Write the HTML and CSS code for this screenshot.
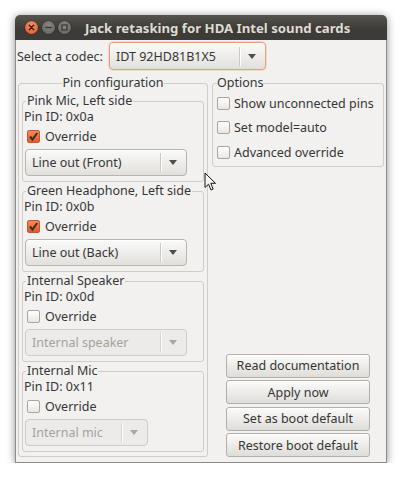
FILE: index.html
```html
<!DOCTYPE html>
<html>
<head>
<meta charset="utf-8">
<link rel="stylesheet" href="styles.css">
</head>
<body>
<div class="window">
  <div class="titlebar">
    <div class="wbtns">
      <span class="wbtn close"><svg width="13" height="13" viewBox="0 0 13 13"><path d="M4.3 4.3 L8.7 8.7 M8.7 4.3 L4.3 8.7" stroke="#3a1d10" stroke-width="1.4" stroke-linecap="round"/></svg></span>
      <span class="wbtn"><svg width="13" height="13" viewBox="0 0 13 13"><path d="M3.8 6.5 H9.2" stroke="#3b3a36" stroke-width="1.6" stroke-linecap="round"/></svg></span>
      <span class="wbtn"><svg width="13" height="13" viewBox="0 0 13 13"><rect x="4" y="4" width="5" height="5" fill="none" stroke="#3b3a36" stroke-width="1.3"/></svg></span>
    </div>
    <div class="title">Jack retasking for HDA Intel sound cards</div>
  </div>
  <div class="content">
    <div class="codec-row">
      <span class="codec-label">Select a codec:</span>
      <div class="combo focus codec"><span class="combo-text">IDT 92HD81B1X5</span><span class="combo-sep"></span><span class="combo-arrow"></span></div>
    </div>
    <div class="panes">
      <fieldset class="frame pinconf">
        <legend class="centered">Pin configuration</legend>
        <fieldset class="frame pin">
          <legend>Pink Mic, Left side</legend>
          <div class="pinid">Pin ID: 0x0a</div>
          <div class="check"><span class="box checked"><svg width="13" height="13" viewBox="0 0 13 13"><path d="M3 6.5 L5.5 9.5 L10.2 3" fill="none" stroke="#3f2a20" stroke-width="2"/></svg></span>Override</div>
          <div class="combo wide"><span class="combo-text">Line out (Front)</span><span class="combo-sep"></span><span class="combo-arrow"></span></div>
        </fieldset>
        <fieldset class="frame pin">
          <legend>Green Headphone, Left side</legend>
          <div class="pinid">Pin ID: 0x0b</div>
          <div class="check"><span class="box checked"><svg width="13" height="13" viewBox="0 0 13 13"><path d="M3 6.5 L5.5 9.5 L10.2 3" fill="none" stroke="#3f2a20" stroke-width="2"/></svg></span>Override</div>
          <div class="combo wide"><span class="combo-text">Line out (Back)</span><span class="combo-sep"></span><span class="combo-arrow"></span></div>
        </fieldset>
        <fieldset class="frame pin">
          <legend>Internal Speaker</legend>
          <div class="pinid">Pin ID: 0x0d</div>
          <div class="check"><span class="box"></span>Override</div>
          <div class="combo wide disabled"><span class="combo-text">Internal speaker</span><span class="combo-sep"></span><span class="combo-arrow"></span></div>
        </fieldset>
        <fieldset class="frame pin">
          <legend>Internal Mic</legend>
          <div class="pinid">Pin ID: 0x11</div>
          <div class="check"><span class="box"></span>Override</div>
          <div class="combo narrow disabled"><span class="combo-text">Internal mic</span><span class="combo-sep"></span><span class="combo-arrow"></span></div>
        </fieldset>
      </fieldset>
      <div class="rightcol">
        <fieldset class="frame options">
          <legend>Options</legend>
          <div class="opt"><span class="box"></span>Show unconnected pins</div>
          <div class="opt"><span class="box"></span>Set model=auto</div>
          <div class="opt"><span class="box"></span>Advanced override</div>
        </fieldset>
        <div class="buttons">
          <div class="btn">Read documentation</div>
          <div class="btn">Apply now</div>
          <div class="btn">Set as boot default</div>
          <div class="btn">Restore boot default</div>
        </div>
      </div>
    </div>
  </div>
</div>
<svg class="cursor" width="14" height="20" viewBox="0 0 14 20"><path d="M1 1 L1 15.5 L4.5 12.2 L7 18 L9.2 17 L6.8 11.3 L11.5 11.3 Z" fill="#f4f4f4" stroke="#111" stroke-width="1" stroke-linejoin="round"/></svg>
</body>
</html>
```

FILE: styles.css
```css
body {
  margin: 0;
  background: #ffffff;
  font-family: "Noto Sans", "DejaVu Sans", sans-serif;
  font-size: 12.5px;
  color: #363636;
}

.window {
  margin: 15px 0 0 15px;
  width: 372px;
  height: 448px;
  display: flex;
  flex-direction: column;
  border-radius: 5px 5px 0 0;
  box-shadow: 0 1px 9px rgba(0, 0, 0, 0.45);
}

.titlebar {
  flex: none;
  height: 25px;
  background: linear-gradient(#55544d, #3c3b37 55%);
  border-radius: 5px 5px 0 0;
  display: flex;
  align-items: center;
  padding-left: 10px;
}

.wbtns {
  display: flex;
  gap: 3.5px;
}

.wbtn {
  width: 13px;
  height: 13px;
  border-radius: 50%;
  background: radial-gradient(circle at 50% 35%, #8a8882, #5f5e58);
  box-shadow: 0 0 0 0.5px #2e2d2a;
  display: flex;
}

.wbtn.close {
  background: radial-gradient(circle at 50% 35%, #f79067, #e4541f);
}

.title {
  margin-left: 14px;
  color: #dfdbd2;
  font-weight: bold;
  font-size: 13.2px;
  white-space: nowrap;
}

.content {
  flex: 1;
  background: #f2f1f0;
  border: 1px solid #8e8b85;
  border-top: none;
  padding: 2px 2px 5px 1px;
  display: flex;
  flex-direction: column;
}

.codec-row {
  display: flex;
  align-items: center;
  height: 28px;
}

.codec-label {
  flex: 0 0 92px;
}

.combo {
  box-sizing: border-box;
  display: flex;
  align-items: center;
  border: 1px solid #b9b5ae;
  border-radius: 4px;
  background: linear-gradient(#fafaf9, #e2e0dc);
  box-shadow: inset 0 1px 0 #ffffff;
}

.combo.codec {
  width: 157px;
  height: 28px;
}

.combo.focus {
  border-color: #e59c7f;
  box-shadow: 0 0 0 1px rgba(240, 119, 70, 0.18), inset 0 1px 0 #ffffff;
}

.combo-text {
  flex: 1;
  padding-left: 6px;
  white-space: nowrap;
}

.combo-sep {
  width: 1px;
  height: 19px;
  background: #cdc9c2;
  box-shadow: 1px 0 0 #ffffff;
}

.combo-arrow {
  width: 0;
  height: 0;
  margin: 0 9px 0 8px;
  border-left: 4.5px solid transparent;
  border-right: 4.5px solid transparent;
  border-top: 5px solid #4e4d4a;
}

.combo.disabled {
  background: #ecebe9;
  border-color: #cfcbc5;
  color: #a5a29c;
  box-shadow: none;
}

.combo.disabled .combo-arrow {
  border-top-color: #aaa7a1;
}

.combo.disabled .combo-sep {
  background: #d6d3cd;
}

.panes {
  flex: 1;
  display: flex;
  gap: 4px;
  margin-top: 6px;
  margin-left: 1px;
}

.frame {
  margin: 0;
  min-width: 0;
  border: 1px solid #d0ccc6;
  border-radius: 3px;
}

.frame legend {
  padding: 0 1px;
  line-height: 14px;
}

.frame legend.centered {
  margin: 0 auto;
}

.pinconf {
  box-sizing: border-box;
  width: 190px;
  flex: none;
  padding: 4px 3px 3px 3px;
}

.pin {
  padding: 1px 0 5px 1px;
  margin-top: 2px;
}

.pin:first-of-type {
  margin-top: 0;
}

.pin legend {
  margin-left: 2px;
}

.pinid {
  height: 16px;
  line-height: 16px;
}

.check {
  display: flex;
  align-items: center;
  gap: 5px;
  height: 18px;
  margin: 2px 0 0 3px;
}

.box {
  box-sizing: border-box;
  width: 13px;
  height: 13px;
  flex: none;
  border: 1px solid #aaa59d;
  border-radius: 2px;
  background: linear-gradient(#ffffff, #e9e7e3);
  display: flex;
}

.box.checked {
  border-color: #c4582d;
  background: linear-gradient(#f6895c, #e35a2b);
}

.box svg {
  margin: -1px;
}

.combo.wide {
  width: 162px;
  height: 27px;
  margin: 4px 0 0 1px;
}

.combo.narrow {
  width: 123px;
  height: 27px;
  margin: 4px 0 0 1px;
}

.rightcol {
  flex: 1;
  display: flex;
  flex-direction: column;
}

.options {
  padding: 1px 4px 1px 4px;
}

.options legend {
  padding: 0;
}

.opt {
  display: flex;
  align-items: center;
  gap: 4px;
  height: 24.5px;
}

.buttons {
  margin-top: auto;
  align-self: center;
  display: flex;
  flex-direction: column;
  gap: 2.5px;
}

.btn {
  box-sizing: border-box;
  width: 144px;
  height: 24px;
  border: 1px solid #b3afa8;
  border-radius: 3px;
  background: linear-gradient(#fbfbfa, #dfddd9);
  box-shadow: inset 0 1px 0 #ffffff;
  display: flex;
  align-items: center;
  justify-content: center;
  white-space: nowrap;
}

.cursor {
  position: absolute;
  left: 204px;
  top: 172px;
}
```
